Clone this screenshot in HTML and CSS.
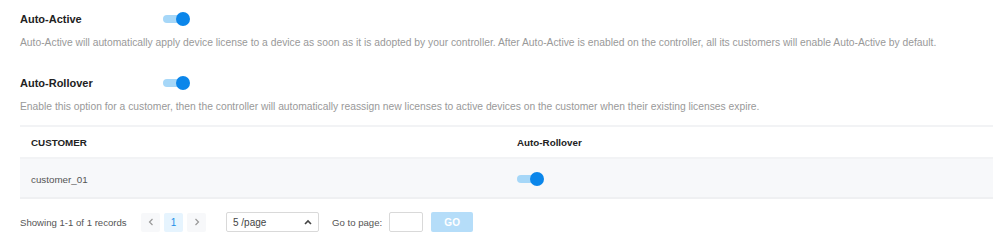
FILE: index.html
```html
<!DOCTYPE html>
<html>
<head>
<meta charset="utf-8">
<link rel="stylesheet" href="styles.css">
</head>
<body>
<div class="page">
  <section class="setting">
    <div class="setting-head">
      <span class="setting-title">Auto-Active</span>
      <span class="toggle"><span class="knob"></span></span>
    </div>
    <p class="setting-desc">Auto-Active will automatically apply device license to a device as soon as it is adopted by your controller. After Auto-Active is enabled on the controller, all its customers will enable Auto-Active by default.</p>
  </section>
  <section class="setting second">
    <div class="setting-head">
      <span class="setting-title">Auto-Rollover</span>
      <span class="toggle"><span class="knob"></span></span>
    </div>
    <p class="setting-desc">Enable this option for a customer, then the controller will automatically reassign new licenses to active devices on the customer when their existing licenses expire.</p>
  </section>
  <div class="table">
    <div class="row head">
      <div class="cell c1">CUSTOMER</div>
      <div class="cell c2">Auto-Rollover</div>
    </div>
    <div class="row body">
      <div class="cell c1">customer_01</div>
      <div class="cell c2"><span class="toggle"><span class="knob"></span></span></div>
    </div>
  </div>
  <div class="pager">
    <span class="records">Showing 1-1 of 1 records</span>
    <div class="pages">
      <span class="pbtn arrow"><svg width="8" height="8" viewBox="0 0 8 8"><path d="M5.5 1 L2.5 4 L5.5 7" fill="none" stroke="#999" stroke-width="1.2"/></svg></span>
      <span class="pbtn active">1</span>
      <span class="pbtn arrow"><svg width="8" height="8" viewBox="0 0 8 8"><path d="M2.5 1 L5.5 4 L2.5 7" fill="none" stroke="#999" stroke-width="1.2"/></svg></span>
    </div>
    <div class="select">
      <span>5 /page</span>
      <svg width="8" height="6" viewBox="0 0 8 6"><path d="M1 5 L4 2 L7 5" fill="none" stroke="#444" stroke-width="1.6"/></svg>
    </div>
    <span class="goto">Go to page:</span>
    <span class="goinput"></span>
    <span class="gobtn">GO</span>
  </div>
</div>
</body>
</html>
```
FILE: styles.css
```css
html, body {
  margin: 0;
  padding: 0;
  background: #fff;
}
body {
  font-family: "Liberation Sans", Arial, sans-serif;
  color: #333;
}
.page {
  padding: 12px 0 0 20px;
}
.setting-head {
  display: flex;
  align-items: center;
  height: 14px;
}
.setting-title {
  width: 143px;
  font-size: 11px;
  font-weight: bold;
  color: #222;
}
.setting-desc {
  margin: 10px 0 0 0;
  font-size: 10.3px;
  color: #999;
  line-height: 14px;
}
.second {
  margin-top: 26px;
}
.toggle {
  position: relative;
  display: inline-block;
  width: 24px;
  height: 8px;
  border-radius: 4px;
  background: #a6d7f8;
}
.toggle .knob {
  position: absolute;
  right: -3px;
  top: -3px;
  width: 14px;
  height: 14px;
  border-radius: 50%;
  background: #0b86ea;
}
.table {
  margin-top: 11px;
  border-top: 2px solid #f2f3f5;
}
.row {
  display: flex;
  align-items: center;
}
.row.head {
  height: 30px;
  border-bottom: 2px solid #f2f3f5;
  font-size: 9.8px;
  font-weight: bold;
  color: #222;
}
.row.body {
  height: 40px;
  background: #f7f8fa;
  border-bottom: 2px solid #eff0f2;
  font-size: 9.8px;
  color: #555;
  padding-top: 2px;
  box-sizing: border-box;
}
.cell.c1 {
  width: 485px;
  padding-left: 11px;
}
.cell.c2 {
  padding-left: 1px;
  display: flex;
  align-items: center;
}
.pager {
  display: flex;
  align-items: center;
  height: 20px;
  margin-top: 13px;
  font-size: 9.6px;
  color: #555;
}
.records {
  width: 121px;
}
.pages {
  display: flex;
  gap: 4px;
}
.pbtn {
  width: 19px;
  height: 19px;
  display: flex;
  align-items: center;
  justify-content: center;
  background: #f7f8fa;
  border-radius: 2px;
  font-size: 10px;
}
.pbtn.active {
  background: #e6f4fe;
  color: #1a8fe8;
}
.select {
  margin-left: 20px;
  width: 79px;
  height: 18px;
  border: 1px solid #d9d9d9;
  border-radius: 2px;
  display: flex;
  align-items: center;
  justify-content: space-between;
  padding: 0 6px 0 6px;
  color: #444;
  font-size: 10px;
}
.goto {
  margin-left: 13px;
}
.goinput {
  margin-left: 7px;
  width: 32px;
  height: 18px;
  border: 1px solid #d9d9d9;
  border-radius: 2px;
}
.gobtn {
  margin-left: 8px;
  width: 42px;
  height: 20px;
  background: #b5ddf9;
  color: #fff;
  border-radius: 2px;
  font-size: 10px;
  font-weight: bold;
  display: flex;
  align-items: center;
  justify-content: center;
}
```
